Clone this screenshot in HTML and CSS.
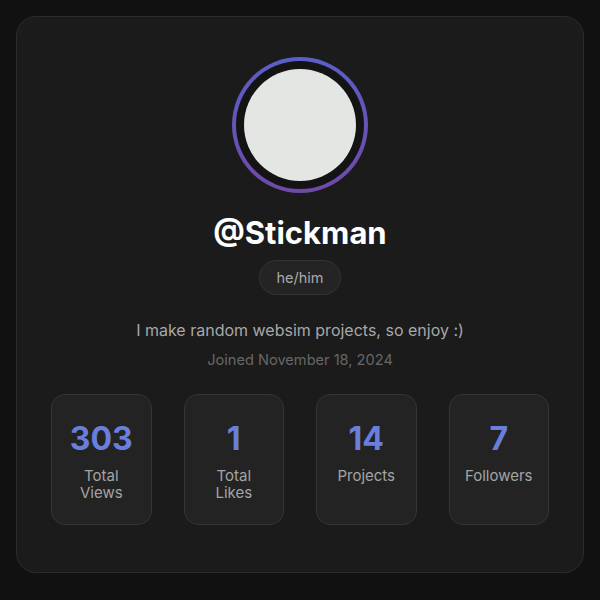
FILE: index.html
```html
<!DOCTYPE html>
<html>
<head>
<meta charset="utf-8">
<link rel="stylesheet" href="styles.css">
</head>
<body>
<div class="card">
  <div class="avatar-ring">
    <div class="avatar-gap">
      <div class="avatar"></div>
    </div>
  </div>
  <h1 class="username">@Stickman</h1>
  <div class="pronouns">he/him</div>
  <p class="bio">I make random websim projects, so enjoy :)</p>
  <p class="joined">Joined November 18, 2024</p>
  <div class="stats">
    <div class="stat"><div class="num">303</div><div class="label">Total<br>Views</div></div>
    <div class="stat"><div class="num">1</div><div class="label">Total<br>Likes</div></div>
    <div class="stat"><div class="num">14</div><div class="label">Projects</div></div>
    <div class="stat"><div class="num">7</div><div class="label">Followers</div></div>
  </div>
</div>
</body>
</html>
```
FILE: styles.css
```css
html, body {
  margin: 0;
  padding: 0;
  background: #111111;
}
body {
  padding: 16px;
  font-family: Inter, "Liberation Sans", sans-serif;
}
.card {
  box-sizing: border-box;
  width: 568px;
  height: 557px;
  background: #1b1b1b;
  border: 1px solid #2c2c2c;
  border-radius: 20px;
  padding: 40px 34px 0;
  display: flex;
  flex-direction: column;
  align-items: center;
}
.avatar-ring {
  width: 136px;
  height: 136px;
  border-radius: 50%;
  padding: 4px;
  box-sizing: border-box;
  background: linear-gradient(180deg, #5a5fc8 0%, #7049a8 100%);
}
.avatar-gap {
  width: 100%;
  height: 100%;
  border-radius: 50%;
  background: #141414;
  padding: 8px;
  box-sizing: border-box;
}
.avatar {
  width: 100%;
  height: 100%;
  border-radius: 50%;
  background: #e4e6e4;
}
.username {
  margin: 22px 0 0;
  font-size: 31px;
  line-height: 36px;
  font-weight: 700;
  color: #ffffff;
}
.pronouns {
  margin-top: 9px;
  height: 35px;
  box-sizing: border-box;
  padding: 0 16px;
  border-radius: 18px;
  background: #242424;
  border: 1px solid #343434;
  color: #aaaaaa;
  font-size: 14.5px;
  line-height: 33px;
}
.bio {
  margin: 24px 0 0;
  font-size: 16px;
  line-height: 22px;
  color: #a8a8a8;
}
.joined {
  margin: 9px 0 0;
  font-size: 14.6px;
  line-height: 20px;
  color: #676767;
}
.stats {
  margin-top: 24px;
  width: 498px;
  display: grid;
  grid-template-columns: repeat(4, 1fr);
  gap: 32px;
}
.stat {
  height: 131px;
  box-sizing: border-box;
  background: #232323;
  border: 1px solid #353535;
  border-radius: 14px;
  display: flex;
  flex-direction: column;
  align-items: center;
  padding-top: 26px;
}
.num {
  font-size: 32px;
  line-height: 36px;
  font-weight: 700;
  color: #6a7fdc;
}
.label {
  margin-top: 10px;
  font-size: 15px;
  line-height: 17px;
  color: #a4a4a4;
  text-align: center;
}
```
